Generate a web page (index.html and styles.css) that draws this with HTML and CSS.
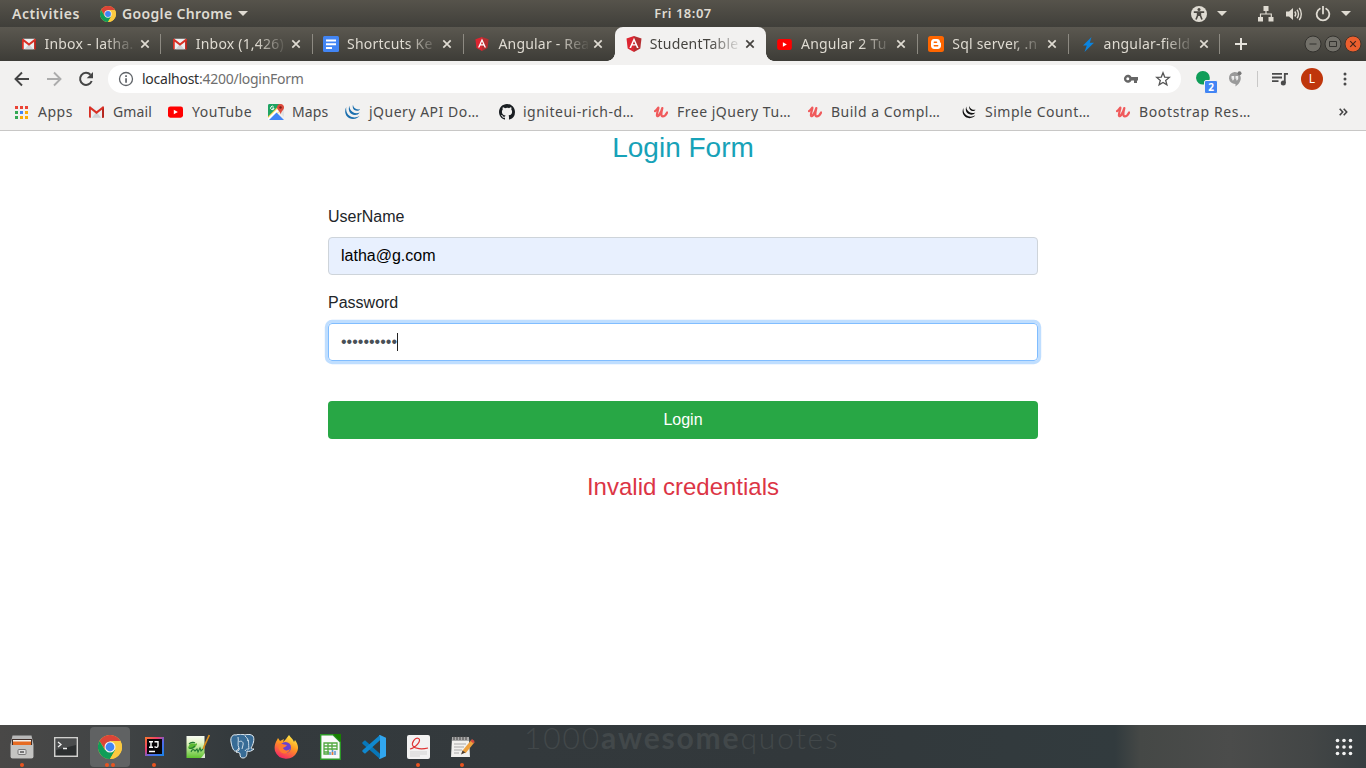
FILE: index.html
```html
<!DOCTYPE html>
<html lang="en">
<head>
<meta charset="utf-8">
<title>StudentTable</title>
<link rel="stylesheet" href="styles.css">
</head>
<body>
<svg class="defs" width="0" height="0">
  <symbol id="gmail" viewBox="0 0 16 12"><path fill="#eceff1" d="M1 0h14v12H1z"/><path fill="#cfd3d6" d="M3 12l5-6 5 6z"/><path fill="#d93025" d="M0 1c0-1 1-1.300 1.800-.7L8 5.200 14.200.3C15-.3 16 0 16 1v10c0 .6-.4 1-1 1h-1V3.300L8 8 2 3.300V12H1c-.6 0-1-.4-1-1z"/><path fill="#b3261e" d="M14 3.300l2-1.500V11c0 .6-.4 1-1 1h-1z"/></symbol>
  <symbol id="angular" viewBox="0 0 16 16"><path fill="#dd2531" d="M8 0L.5 2.600 1.700 12.600 8 16z"/><path fill="#b52e31" d="M8 0l7.500 2.600-1.200 10L8 16z"/><path fill="#fff" fill-rule="evenodd" d="M8 1.800L3.400 12h1.700l1-2.400h3.800l1 2.400h1.700zm0 3.400L9.300 8.200H6.700z"/></symbol>
  <symbol id="youtube" viewBox="0 0 16 12"><rect width="16" height="12" rx="2.500" fill="#f00"/><path fill="#fff" d="M6.200 3.500v5l4.300-2.500z"/></symbol>
  <symbol id="close" viewBox="0 0 10 10"><path d="M1.300 1.300l7.400 7.400M8.700 1.300L1.300 8.700" fill="none" stroke="currentColor" stroke-width="1.700"/></symbol>
  <symbol id="caret" viewBox="0 0 10 5"><path d="M0 0h10L5 5z" fill="currentColor"/></symbol>
  <symbol id="chrome" viewBox="0 0 24 24"><circle cx="12" cy="12" r="12" fill="#fbc940"/><path fill="#db4437" d="M1.600 6A12 12 0 0 1 22.400 6H12L7 14.500z"/><path fill="#0f9d58" d="M1.600 6A12 12 0 0 0 12 24l5.200-9L12 12 7 15z"/><path fill="#fbc940" d="M12 24l5.200-9 .2-6-5.400-3h10.400A12 12 0 0 1 12 24z"/><circle cx="12" cy="12" r="5.500" fill="#f4f4f4"/><circle cx="12" cy="12" r="4.400" fill="#4285f4"/></symbol>
  <symbol id="udemy" viewBox="0 0 16 14"><path d="M1 5.500C3 4.500 4.500 1.500 5 1.500S2.800 8.500 3.400 10.500C4 13 7.500 9 9.500 2 8 8 8 11.500 10 11.500c1.800 0 3.500-1.500 5-4.500" fill="none" stroke="#f05a5b" stroke-width="2.500" stroke-linecap="round" stroke-linejoin="round"/></symbol>
  <symbol id="jquery" viewBox="0 0 16 16"><g fill="currentColor"><path d="M1.800 3C-1 8 1.500 14.800 8.500 15c3.200 0 5.300-1.200 6.700-3.200-3 2-7.200 2.200-10.200 0C2.200 9.800 1.200 6.500 1.800 3z"/><path d="M5 1.800C3 6 5.500 11 10.500 11c2 0 3.600-.8 4.700-2.500-2.200 1-5 .9-7-.5C6 6.500 4.800 4.500 5 1.800z"/><path d="M8.500.8c-1 3 .8 6 4 6 1.300 0 2.300-.5 3-1.500-1.500.3-3.200.2-4.700-.8C9.300 3.500 8.600 2.300 8.500.8z"/></g></symbol>
</svg>

<header class="topbar">
  <span class="activities">Activities</span>
  <svg class="app-icon" width="16" height="16"><use href="#chrome"/></svg>
  <span class="app-name">Google Chrome</span>
  <svg class="app-caret" width="10" height="5"><use href="#caret"/></svg>
  <time class="clock">Fri 18:07</time>
  <div class="indicators">
    <svg width="16" height="16" viewBox="0 0 16 16"><circle cx="8" cy="8" r="8" fill="currentColor"/><circle cx="8" cy="3.600" r="1.500" fill="#4b4842"/><path d="M2.800 6.100h10.400M8 6v4M6.600 6.500v3L5 13.500M9.400 6.500v3l1.600 4" fill="none" stroke="#4b4842" stroke-width="1.600"/></svg>
    <svg width="10" height="5"><use href="#caret"/></svg>
    <svg width="16" height="16" viewBox="0 0 16 16"><path d="M5.500 0h5v5h-5zM0 11h5v4.500H0zM10.500 11h5v4.500h-5z" fill="currentColor"/><path d="M8 5v3M2.500 11V8h10.800v3" fill="none" stroke="currentColor" stroke-width="1.200"/></svg>
    <svg width="16" height="16" viewBox="0 0 16 16"><path d="M0 5.500h3L7 2v12l-4-3.500H0z" fill="currentColor"/><path d="M8.800 5.500c1 1.300 1 3.700 0 5M11 3.800c2 2.300 2 6.100 0 8.400M13.200 2c2.800 3.300 2.800 8.700 0 12" fill="none" stroke="currentColor" stroke-width="1.400"/></svg>
    <svg width="16" height="16" viewBox="0 0 16 16"><path d="M4.800 2.700a6.300 6.300 0 1 0 6.400 0M8 .5v7" fill="none" stroke="currentColor" stroke-width="1.800" stroke-linecap="round"/></svg>
    <svg width="10" height="5"><use href="#caret"/></svg>
  </div>
</header>

<nav class="tabstrip">
  <div class="tab"><span class="fav"><svg width="14" height="12"><use href="#gmail"/></svg></span><span class="title">Inbox - latha.</span><svg class="x" width="10" height="10"><use href="#close"/></svg></div>
  <div class="tab"><span class="fav"><svg width="14" height="12"><use href="#gmail"/></svg></span><span class="title">Inbox (1,426)</span><svg class="x" width="10" height="10"><use href="#close"/></svg></div>
  <div class="tab"><span class="fav"><svg width="16" height="16" viewBox="0 0 16 16"><rect width="16" height="16" rx="1.500" fill="#4285f4"/><path d="M3 3.500h10v2H3zM3 7.200h10v2H3zM3 11h6v2H3z" fill="#fff"/></svg></span><span class="title">Shortcuts Ke</span><svg class="x" width="10" height="10"><use href="#close"/></svg></div>
  <div class="tab plain"><span class="fav"><svg width="14" height="14"><use href="#angular"/></svg></span><span class="title">Angular - Rea</span><svg class="x" width="10" height="10"><use href="#close"/></svg></div>
  <div class="tab active"><span class="fav"><svg width="16" height="16"><use href="#angular"/></svg></span><span class="title">StudentTable</span><svg class="x" width="10" height="10"><use href="#close"/></svg></div>
  <div class="tab"><span class="fav"><svg width="15" height="11"><use href="#youtube"/></svg></span><span class="title">Angular 2 Tu</span><svg class="x" width="10" height="10"><use href="#close"/></svg></div>
  <div class="tab"><span class="fav"><svg width="16" height="16" viewBox="0 0 16 16"><rect width="16" height="16" rx="2.500" fill="#ff6600"/><path fill="#fff" fill-rule="evenodd" d="M6 3h3c1.900 0 3 1.300 3 2.800 0 .8.300.7.700.9.300.1.300.4.300.8v2.300c0 1.900-1.300 3.200-3.200 3.200H6.200C4.300 13 3 11.700 3 9.800V6.200C3 4.300 4.200 3 6 3zm.3 2.600c-1 0-1 1.400 0 1.400h2.200c1 0 1-1.400 0-1.400zm0 3.500c-1 0-1 1.400 0 1.400h3.400c1 0 1-1.400 0-1.400z"/></svg></span><span class="title">Sql server, .n</span><svg class="x" width="10" height="10"><use href="#close"/></svg></div>
  <div class="tab"><span class="fav"><svg width="12" height="15" viewBox="0 0 12 15"><path d="M9.500 0L1 8.500h3.800L2.500 15 12 5.800H7.800z" fill="#0b84e0"/></svg></span><span class="title">angular-field</span><svg class="x" width="10" height="10"><use href="#close"/></svg></div>
  <svg class="new-tab" width="14" height="14" viewBox="0 0 14 14"><path d="M7 1v12M1 7h12" stroke="#e6e3dc" stroke-width="2" fill="none"/></svg>
  <div class="window-buttons">
    <svg width="18" height="18" viewBox="0 0 18 18"><circle cx="9" cy="9" r="8" fill="#73716a" stroke="#33322e"/><path d="M5.500 9h7" stroke="#33322e"/></svg>
    <svg width="18" height="18" viewBox="0 0 18 18"><circle cx="9" cy="9" r="8" fill="#73716a" stroke="#33322e"/><path d="M5.500 6.500h7v5h-7z" stroke="#33322e" fill="none"/></svg>
    <svg width="18" height="18" viewBox="0 0 18 18"><circle cx="9" cy="9" r="8" fill="#ec5f2e" stroke="#42342c"/><path d="M6.200 6.200l5.600 5.600M11.800 6.200l-5.600 5.600" stroke="#43251b" stroke-width="1.200"/></svg>
  </div>
</nav>

<div class="toolbar">
  <svg width="16" height="16" viewBox="0 0 16 16"><path d="M15 8H2M8 1.500L1.500 8 8 14.500" fill="none" stroke="#454545" stroke-width="1.900"/></svg>
  <svg width="16" height="16" viewBox="0 0 16 16"><path d="M1 8h13M8 1.500L14.500 8 8 14.500" fill="none" stroke="#acacac" stroke-width="1.900"/></svg>
  <svg width="16" height="16" viewBox="0 0 16 16"><path d="M13.700 10A6 6 0 1 1 12.500 3.800" fill="none" stroke="#454545" stroke-width="2"/><path d="M15 1v6.300H8.700z" fill="#454545"/></svg>
  <div class="omnibox">
    <svg width="16" height="16" viewBox="0 0 16 16"><circle cx="8" cy="8" r="6.500" fill="none" stroke="#5f6368" stroke-width="1.300"/><path d="M7.200 4.300h1.700V6H7.200zM7.200 7.200h1.700v4.500H7.200z" fill="#5f6368"/></svg>
    <span class="url"><b>localhost</b>:4200/loginForm</span>
    <svg class="key" width="16" height="10" viewBox="0 0 16 10"><path fill="#666" fill-rule="evenodd" d="M8.500 3A4 4 0 1 0 8.500 6.500H11V9h3V6.500h1V3zM4.800 3.200a1.500 1.500 0 1 1 0 3 1.500 1.500 0 0 1 0-3z"/></svg>
    <svg class="star" width="16" height="16" viewBox="0 0 16 16"><path d="M8 1.800l1.700 4.300 4.600.3-3.600 3 1.200 4.500L8 11.400l-3.900 2.500 1.200-4.500-3.600-3 4.600-.3z" fill="none" stroke="#555" stroke-width="1.300"/></svg>
  </div>
  <div class="chat"><svg width="14" height="16" viewBox="0 0 14 16"><path d="M7 0a6.800 6.800 0 0 1 6.800 6.800C13.800 11 11 14 8 16v-2.500A6.800 6.800 0 1 1 7 0z" fill="#0f9d58"/></svg><span class="count">2</span></div>
  <svg class="hangouts" width="14" height="16" viewBox="0 0 14 16"><path d="M6.500 1a6 6 0 0 1 6.300 6c0 4-3 7-5.300 8.500V13A6 6 0 1 1 6.500 1z" fill="#9a9a9a"/><path d="M3.500 5h2.700v3L5 9.500 4 9l.7-1.300H3.500zM7.500 5h2.700v3L9 9.500 8 9l.7-1.300H7.500z" fill="#eee"/><circle cx="11.500" cy="2.300" r="2" fill="#777"/></svg>
  <i class="divider"></i>
  <svg class="queue" width="17" height="14" viewBox="0 0 17 14"><path d="M0 1.800h10M0 5.500h10M0 9.200h6.500" stroke="#4a4a4a" stroke-width="1.800"/><path d="M12.800 11V1.800H16" fill="none" stroke="#4a4a4a" stroke-width="1.800"/><circle cx="11.300" cy="11" r="2.500" fill="#4a4a4a"/></svg>
  <span class="avatar">L</span>
  <svg class="menu" width="4" height="14" viewBox="0 0 4 14"><circle cx="2" cy="2" r="1.500" fill="#4a4a4a"/><circle cx="2" cy="7" r="1.500" fill="#4a4a4a"/><circle cx="2" cy="12" r="1.500" fill="#4a4a4a"/></svg>
</div>

<nav class="bookmarks">
  <a><span class="bi"><svg width="13" height="13" viewBox="0 0 13 13"><path fill="#ea4335" d="M0 0h3v3H0zM5 0h3v3H5zM10 0h3v3h-3z"/><path fill="#34a853" d="M0 5h3v3H0zM0 10h3v3H0z"/><path fill="#4285f4" d="M5 5h3v3H5z"/><path fill="#fbad05" d="M10 5h3v3h-3zM5 10h3v3H5zM10 10h3v3h-3z"/></svg></span><span>Apps</span></a>
  <a><span class="bi"><svg width="15" height="12"><use href="#gmail"/></svg></span><span class="tight">Gmail</span></a>
  <a><span class="bi"><svg width="15" height="12"><use href="#youtube"/></svg></span><span>YouTube</span></a>
  <a><span class="bi"><svg width="16" height="16" viewBox="0 0 16 16"><path fill="#1fa463" d="M0 1.500C0 .5.500 0 1.500 0H12v4L0 16z"/><path fill="#ffd04b" d="M0 12.500L12.500 0 16 3 3 16H0z"/><path fill="#e1e3e4" d="M10 7l6 6V3l-3-1z"/><path fill="#fff" d="M0 14L10 4l2 2L2 16H0z"/><path fill="#4285f4" d="M8.500 8.500L16 16H1z"/><path fill="#dd4b3e" d="M12.500 0A3.300 3.300 0 0 1 16 3.400C16 6 13 7 12.700 10.500 12.300 7 9 6 9 3.400A3.300 3.300 0 0 1 12.500 0z"/><circle cx="12.500" cy="3.500" r="1.200" fill="#7c1d17"/><path d="M5.700 3A1.700 1.700 0 1 0 6 4.200H4.300" fill="none" stroke="#fff"/></svg></span><span class="tight">Maps</span></a>
  <a class="blue"><span class="bi"><svg width="17" height="16"><use href="#jquery"/></svg></span><span>jQuery API Do…</span></a>
  <a><span class="bi"><svg width="16" height="16" viewBox="0 0 16 16"><path fill="#1b1f23" fill-rule="evenodd" d="M8 0C3.580 0 0 3.580 0 8c0 3.540 2.290 6.530 5.470 7.590.4.070.55-.17.55-.38 0-.19-.01-.82-.01-1.490-2.010.37-2.530-.49-2.690-.94-.09-.23-.48-.94-.82-1.130-.28-.15-.68-.52-.01-.53.630-.01 1.080.58 1.230.82.720 1.210 1.870.87 2.330.66.070-.52.280-.87.510-1.070-1.780-.2-3.640-.89-3.640-3.950 0-.87.310-1.590.82-2.150-.08-.2-.36-1.020.08-2.120 0 0 .67-.21 2.200.82A7.600 7.600 0 0 1 8 3.860c.68 0 1.360.09 2 .27 1.530-1.040 2.200-.82 2.200-.82.440 1.100.160 1.920.080 2.120.510.56.820 1.270.820 2.150 0 3.070-1.870 3.750-3.650 3.950.290.25.540.73.540 1.480 0 1.070-.01 1.930-.01 2.200 0 .21.150.46.550.38A8 8 0 0 0 16 8c0-4.420-3.580-8-8-8z"/></svg></span><span>igniteui-rich-d…</span></a>
  <a><span class="bi"><svg width="14" height="13"><use href="#udemy"/></svg></span><span>Free jQuery Tu…</span></a>
  <a><span class="bi"><svg width="14" height="13"><use href="#udemy"/></svg></span><span>Build a Compl…</span></a>
  <a class="black"><span class="bi"><svg width="14" height="14"><use href="#jquery"/></svg></span><span>Simple Count…</span></a>
  <a><span class="bi"><svg width="14" height="13"><use href="#udemy"/></svg></span><span class="wide">Bootstrap Res…</span></a>
  <svg class="more" width="9" height="8" viewBox="0 0 9 8"><path d="M.7.7L3.700 4 .7 7.300M4.700.7L7.700 4 4.700 7.300" fill="none" stroke="#444" stroke-width="1.600"/></svg>
</nav>

<main class="page">
  <form class="login">
    <h3>Login Form</h3>
    <label>UserName</label>
    <div class="control filled">latha@g.com</div>
    <label>Password</label>
    <div class="control focused"><span class="mask">••••••••••</span><span class="cursor"></span></div>
    <button type="button">Login</button>
    <h4>Invalid credentials</h4>
  </form>
</main>

<footer class="dock">
  <div class="slot run"><svg width="24" height="24" viewBox="0 0 24 24"><path d="M2.500.5h19l2 9v12a2 2 0 0 1-2 2h-19a2 2 0 0 1-2-2v-12z" fill="#b8b8b8"/><path d="M2 4h20v6H2z" fill="#43302a"/><path d="M3 5h18v2H3z" fill="#f2eee7"/><path d="M3 6.500h18V10H3z" fill="#e66b22"/><path d="M1 10h22v13H1z" fill="#c4c4c2"/><rect x="8" y="14.500" width="8" height="5" rx="1" fill="#ddd" stroke="#777"/><path d="M10 17h4" stroke="#555" stroke-width="1.500"/></svg></div>
  <div class="slot"><svg width="24" height="20" viewBox="0 0 24 20"><rect x=".7" y=".7" width="22.600" height="18.600" fill="#2c2f30" stroke="#d0d0ce" stroke-width="1.500"/><path d="M2 2h20v6L2 13z" fill="#4a4c4d"/><path d="M4 5l3 2.500L4 10M9 11.500h4" fill="none" stroke="#eee" stroke-width="1.300"/></svg></div>
  <div class="slot current run two"><svg width="24" height="24"><use href="#chrome"/></svg></div>
  <div class="slot run"><svg width="19" height="19" viewBox="0 0 19 19"><defs><linearGradient id="ij" x2="1" y2="1"><stop stop-color="#f97a2b"/><stop offset=".35" stop-color="#ee3d6d"/><stop offset=".6" stop-color="#5269e8"/><stop offset="1" stop-color="#1685e8"/></linearGradient></defs><rect width="19" height="19" fill="url(#ij)"/><path d="M2 2h15v15H2z" fill="#080508"/><path d="M4 4.700h4M6 4.700v5.600M4 10.300h4M9.500 4.700H13v4c0 2-2 2-3.500 1M4 14.500h6" fill="none" stroke="#fff" stroke-width="1.400"/></svg></div>
  <div class="slot"><svg width="24" height="25" viewBox="0 0 24 25"><defs><linearGradient id="np" x2="0" y2="1"><stop stop-color="#f8fbf4"/><stop offset=".3" stop-color="#e5f5c6"/><stop offset="1" stop-color="#5fc42f"/></linearGradient></defs><path d="M.5 2h18v19l-3 3H.5z" fill="url(#np)"/><path d="M19 24v-5l-4 5z" fill="#dce8d3"/><path d="M2 14c1-4 4-6 7-4 2-2 3 0 1 2-2 3-5 4-8 2z" fill="#5dba33"/><path d="M3 10c2-2 5-2 6-1M3 14c2 1 4 0 6-2M5 18c1-3 3-3 4-1l2-2 1 3 2-4 1 3 2-2" fill="none" stroke="#237b32" stroke-width="1.100"/><path d="M23.300 1l-5 11-1 3" stroke="#d88b19" stroke-width="1.700" fill="none"/></svg></div>
  <div class="slot"><svg width="25" height="25" viewBox="0 0 25 25"><path d="M6 1C3 0 0 3 1 8c1 6 3 10 5 9 1 0 2-2 3-3v2l-3 2c2 1 4 0 4 2 0 3 1 4 3 4 4 0 4-4 4-7 2 1 5 0 7-2-2 0-3 0-3-1 2-3 4-9 2-12-2-2-6-2-8-1-2-1-7-1-9 0z" fill="#386c96" stroke="#e4edf3" stroke-width="1"/><path d="M9 14c-2-3 0-7-1-11M15 2c5 4 3 8 4 13-2 0-3 0-4 2M9 8c2-2 5 0 4 3l-1 4M17 6l2 1" fill="none" stroke="#dce8ef" stroke-width=".9"/></svg></div>
  <div class="slot"><svg width="24" height="24" viewBox="0 0 24 24"><defs><linearGradient id="ff" x1=".8" x2=".3" y2="1"><stop stop-color="#fff44f"/><stop offset=".45" stop-color="#ff9a20"/><stop offset="1" stop-color="#f52467"/></linearGradient></defs><path d="M15 0c2 3 4 4 5 7l1-2c3 4 4 8 2 12a12 12 0 0 1-22-1C0 12 1 8 3 5l1-2 2 3 4-2-1 3c3-2 4-5 6-7z" fill="url(#ff)"/><circle cx="11.500" cy="12.500" r="5.500" fill="#6942cf"/><path d="M5 9c4-1 5 1 8 1-1 2-3 2-4 3 1 3 5 3 7 1-1 5-8 6-10 2-2-2-2-5-1-7z" fill="#ff792e"/></svg></div>
  <div class="slot"><svg width="21" height="26" viewBox="0 0 21 26"><path d="M.7.7H13L20.300 8v17.300H.7z" fill="#fafafa" stroke="#2b9727" stroke-width="1.400"/><path d="M13 0h8v8z" fill="#178000"/><path d="M4 9h13v11H4zM4 12h13M4 15h13M4 18h9M8 9v11M12 9v11" fill="none" stroke="#53a942" stroke-width="1.300"/><path d="M9 16h9v5H9z" fill="#eee"/><path d="M10 21v-3M12.500 21v-5M15 21v-4" stroke="#5b95cf" stroke-width="1.500"/><path d="M12.500 21v-3" stroke="#eb7d37" stroke-width="1.500"/></svg></div>
  <div class="slot"><svg width="24" height="24" viewBox="0 0 24 24"><path fill="#0877b9" d="M1.400 6.500L3 5.300l15 13.500V24L.8 9c-.9-.8-.7-1.800.6-2.500z"/><path fill="#1088cf" d="M1.400 17.500L3 18.700 18 5.200V0L.8 15c-.9.800-.7 1.800.6 2.500z"/><path fill="#31a6ef" d="M17 .8c.3-.7.900-1 1.500-.6L24 2.700v18.600l-5.500 2.500c-.6.300-1.200 0-1.500-.6l1-1V1.800z"/></svg></div>
  <div class="slot run"><svg width="23" height="24" viewBox="0 0 23 24"><rect width="23" height="24" rx="2" fill="#f2f2f2"/><path d="M3 14C9 13 15 5 11.500 3.500S4 8 6 11s9 3.500 15 2" fill="none" stroke="#df3434" stroke-width="1.200"/><path d="M3 17h17M3 19h17M3 21h10" stroke="#d3d3d3"/></svg></div>
  <div class="slot run"><svg width="25" height="22" viewBox="0 0 25 22"><path d="M2 2h17l1 19H1z" fill="#f2f1ef"/><path d="M2 1h17v4H2z" fill="#aaa"/><path d="M4 0v4M7 0v4M10 0v4M13 0v4M16 0v4" stroke="#444"/><path d="M4 8h12M4 11h10M4 14h8M4 17h5" stroke="#aaa" stroke-width="1.100"/><path d="M23 5L14 16" stroke="#eda03d" stroke-width="4"/><path d="M24.500 5L22 3l-1.500 2 3 2.500z" fill="#d34a40"/><path d="M12.500 14.500l-1.500 4 4.500-2z" fill="#4b3d30"/></svg></div>
  <div class="watermark">1000<b>awesome</b>quotes</div>
  <svg class="apps" width="18" height="18" viewBox="0 0 18 18"><g fill="#f2f2f2"><circle cx="2.500" cy="2.500" r="1.800"/><circle cx="9" cy="2.500" r="1.800"/><circle cx="15.500" cy="2.500" r="1.800"/><circle cx="2.500" cy="9" r="1.800"/><circle cx="9" cy="9" r="1.800"/><circle cx="15.500" cy="9" r="1.800"/><circle cx="2.500" cy="15.500" r="1.800"/><circle cx="9" cy="15.500" r="1.800"/><circle cx="15.500" cy="15.500" r="1.800"/></g></svg>
</footer>
</body>
</html>
```

FILE: styles.css
```css
* { box-sizing: border-box; }
body {
  margin: 0;
  width: 1366px;
  height: 768px;
  overflow: hidden;
  display: flex;
  flex-direction: column;
  background: #fff;
  font: 14px/20px "Noto Sans", "Open Sans", sans-serif;
}
svg { display: block; flex: none; }
.defs { position: absolute; }

.topbar {
  height: 27px;
  flex: none;
  display: flex;
  align-items: center;
  padding: 0 15px 0 12px;
  background: linear-gradient(#56534b, #403f3a);
  color: #dfdbd2;
  font-weight: 600;
  position: relative;
  white-space: nowrap;
}
.activities { width: 88px; letter-spacing: .550px; }
.app-name { margin-left: 6px; width: 116px; letter-spacing: .350px; }
.clock { position: absolute; left: 583px; width: 200px; text-align: center; font-size: 13px; letter-spacing: .500px; line-height: 18px; top: 4px; }
.indicators { margin-left: auto; display: flex; align-items: center; }
.indicators svg:nth-child(2) { margin: 0 31px 0 10px; }
.indicators svg:nth-child(4) { margin: 0 13px 0 12px; }
.indicators svg:nth-child(6) { margin-left: 10px; }

.tabstrip {
  height: 34px;
  flex: none;
  display: flex;
  align-items: center;
  padding-left: 10px;
  background: linear-gradient(#5b5850, #3d3c37);
  color: #dfdbd2;
}
.tab {
  width: 151.300px;
  flex: none;
  height: 34px;
  display: flex;
  align-items: center;
  padding-left: 10.500px;
  position: relative;
}
.tab::after { content: ""; position: absolute; right: 0; top: 7px; width: 1px; height: 20px; background: #8d8a82; }
.tab.plain::after, .tab.active::after { display: none; }
.fav { width: 16px; display: flex; justify-content: center; }
.title {
  width: 91px;
  margin-left: 8px;
  letter-spacing: .200px;
  white-space: nowrap;
  -webkit-mask-image: linear-gradient(90deg, #000 60px, transparent 92px);
  mask-image: linear-gradient(90deg, #000 60px, transparent 92px);
}
.x { margin-left: 4px; }
.active { background: #f2f1f0; border-radius: 8px 8px 0 0; color: #45433f; }
.active::before {
  content: "";
  position: absolute;
  left: -8px; right: -8px; bottom: 0;
  height: 8px;
  background:
    radial-gradient(circle at 0 0, transparent 7.500px, #f2f1f0 8px) left / 8px 8px no-repeat,
    radial-gradient(circle at 100% 0, transparent 7.500px, #f2f1f0 8px) right / 8px 8px no-repeat;
}
.new-tab { margin-left: 14px; }
.window-buttons { margin: 0 4px 0 auto; display: flex; gap: 2px; }

.toolbar {
  height: 35px;
  flex: none;
  display: flex;
  align-items: center;
  padding: 1px 0 0 14px;
  background: #f2f1f0;
}
.toolbar > svg:nth-child(-n+2) { margin-right: 16px; }
.omnibox {
  width: 1073px;
  height: 28px;
  margin-left: 14px;
  padding: 0 10px;
  border-radius: 14px;
  background: #fff;
  display: flex;
  align-items: center;
}
.url { margin-left: 8px; color: #6e6e6e; white-space: nowrap; letter-spacing: -.250px; }
.url b { font-weight: 400; color: #2f2f2f; }
.key { margin-left: auto; margin-right: 16px; }
.chat { position: relative; margin-left: 15px; }
.count {
  position: absolute;
  left: 8px; top: 9px;
  width: 14px; height: 14px;
  border: 1px solid #f2f1f0;
  border-radius: 2px;
  background: #4285f4;
  color: #fff;
  font: bold 10px/12px "Noto Sans", sans-serif;
  text-align: center;
}
.hangouts { margin-left: 18px; }
.divider { width: 1px; height: 16px; margin-left: 15px; background: #c9c8c7; }
.queue { margin-left: 14px; }
.avatar {
  width: 22px; height: 22px;
  margin-left: 12px;
  border-radius: 50%;
  background: #bf360c;
  color: #fff;
  font-size: 12px;
  line-height: 22px;
  text-align: center;
}
.menu { margin-left: 20px; }

.bookmarks {
  height: 35px;
  flex: none;
  display: grid;
  grid-template-columns: 75px 79px 100px 77px 154px 154px 154px 154px 154px 154px auto;
  align-items: center;
  padding: 0 0 2px 13px;
  border-bottom: 1px solid #c8c7c6;
  background: #f2f1f0;
  color: #4b4b4b;
  letter-spacing: .500px;
}
.bookmarks a { display: flex; align-items: center; white-space: nowrap; }
.bookmarks .tight { letter-spacing: .150px; }
.bookmarks .wide { letter-spacing: .650px; }
.bi { width: 17px; margin-right: 8px; display: flex; justify-content: center; flex: none; }
.blue svg { color: #1b6fae; }
.black svg { color: #111; }
.more { margin-left: 71px; }

.page { flex: 1; display: flex; justify-content: center; font: 16px/24px "Liberation Sans", Arial, sans-serif; color: #212529; }
.login { width: 710px; display: flex; flex-direction: column; }
.login h3 { margin: 0 0 40px; font-size: 28px; line-height: 33px; font-weight: 400; text-align: center; color: #17a2b8; }
.login label { margin-bottom: 8px; padding-top: 1px; }
.control {
  height: 38px;
  margin-bottom: 15px;
  padding: 0 12px;
  border: 1px solid #ced4da;
  border-radius: 4px;
  display: flex;
  align-items: center;
}
.filled { background: #e8f0fe; color: #000; }
.focused { border-color: #80bdff; box-shadow: 0 0 0 3.200px rgba(0, 123, 255, .25); margin-bottom: 40px; }
.mask { color: #495057; }
.cursor { width: 1px; height: 18px; margin-bottom: 1px; background: #222; }
.login button {
  height: 38px;
  margin-bottom: 34px;
  border: 0;
  border-radius: 4px;
  background: #28a745;
  color: #fff;
  font: 16px/24px "Liberation Sans", Arial, sans-serif;
}
.login h4 { margin: 0; font-size: 24px; line-height: 28px; font-weight: 400; text-align: center; color: #dc3545; }

.dock {
  height: 43px;
  flex: none;
  display: flex;
  align-items: center;
  padding-left: 2px;
  background: linear-gradient(90deg, #494847 0, #414445 110px, #343a3d 230px, #32383b 800px, #323b3e 1115px, #454846 1140px, #4b4c4b 1230px, #434646 1310px, #373e41 1366px);
}
.slot {
  width: 40px; height: 40px;
  margin: 1px 4px 0 0;
  padding-bottom: 1px;
  border-radius: 4px;
  flex: none;
  display: flex;
  align-items: center;
  justify-content: center;
  position: relative;
}
.current { background: #606263; }
.run::after { content: ""; position: absolute; bottom: 0; left: 18px; width: 4px; height: 4px; border-radius: 50%; background: #e95420; }
.two::after { left: 15px; box-shadow: 6px 0 #e95420; }
.watermark {
  align-self: flex-start;
  margin-left: 38px;
  font: 300 30px/24px Lato, sans-serif;
  letter-spacing: 1.850px;
  white-space: nowrap;
  color: #42484a;
}
.watermark b { font-weight: 700; }
.apps { margin: 1px 13px 0 auto; }
```
